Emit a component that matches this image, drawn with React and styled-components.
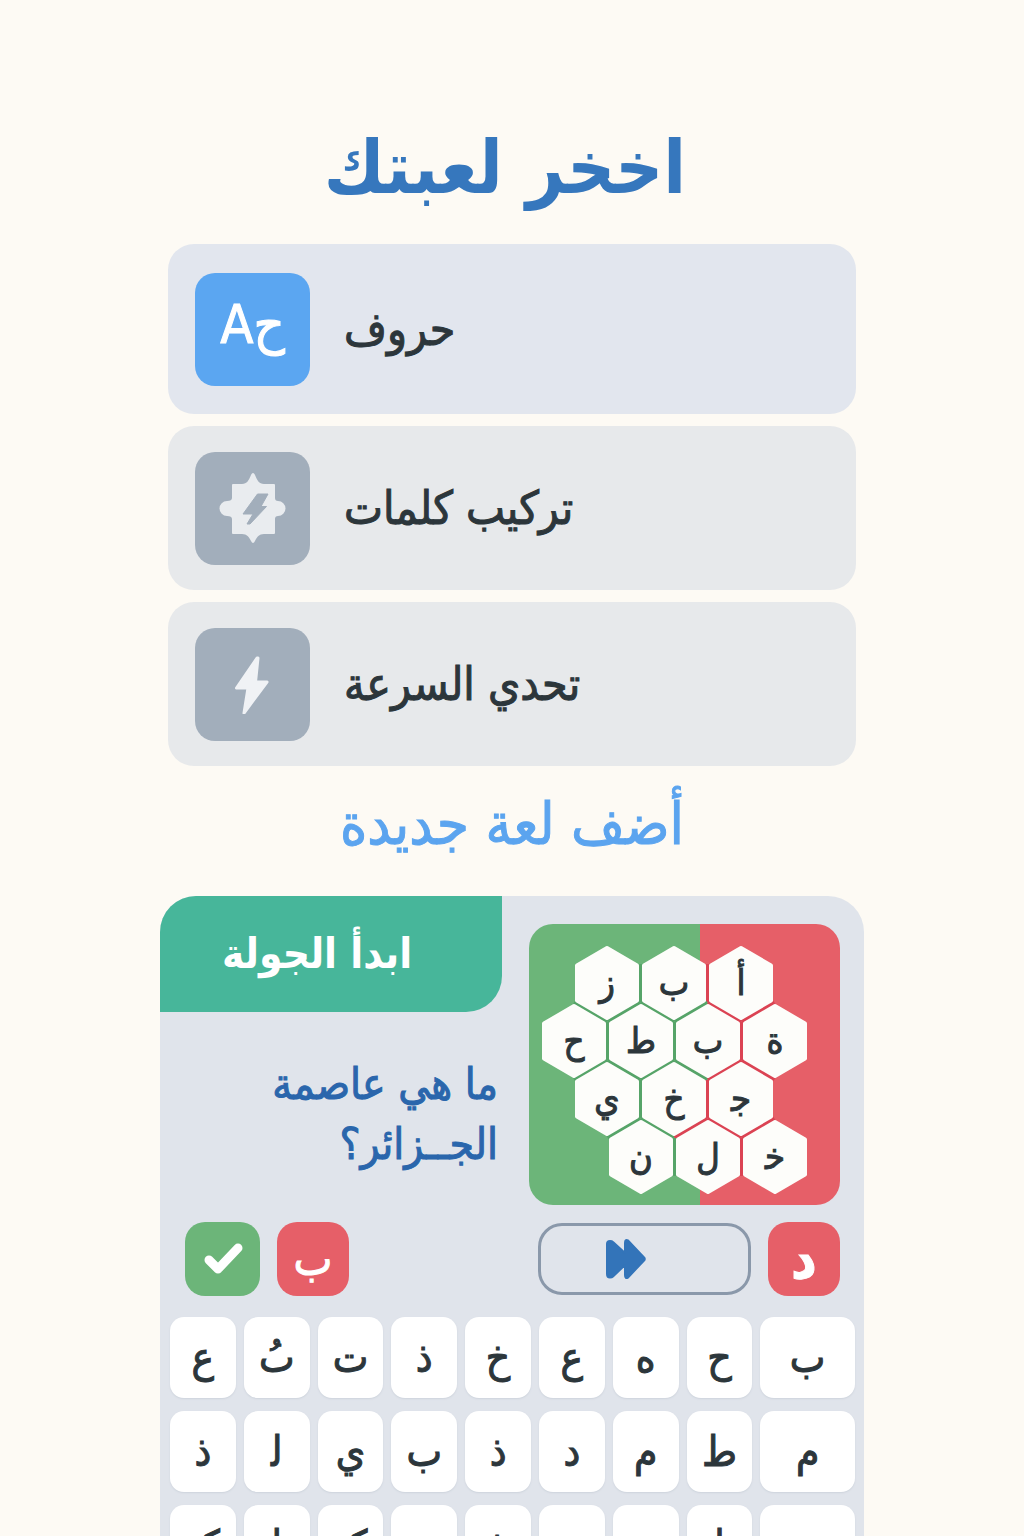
import React from 'react';
import styled, { createGlobalStyle } from 'styled-components';

const Global = createGlobalStyle`
  *, *::before, *::after { box-sizing: border-box; }
  body { margin: 0; background: #fdfaf4; }
  button { border: 0; padding: 0; font: inherit; color: inherit; cursor: pointer; }
  svg { display: block; }
`;

const ink = '#2c363b';

const Page = styled.div`
  height: 100vh;
  overflow-y: auto;
  scrollbar-width: none;
  padding: 0 16px;
  background: #fdfaf4;
  color: ${ink};
  font-family: 'DejaVu Sans Condensed', 'DejaVu Sans', 'Noto Sans', sans-serif;
`;

const Main = styled.main`
  max-width: 704px;
  margin: 0 auto;
  padding-top: 112px;
  display: flex;
  flex-direction: column;
`;

const Title = styled.h1`
  margin: 0;
  padding-right: 14px;
  height: 132px;
  line-height: 110px;
  text-align: center;
  font-size: 74px;
  font-weight: 700;
  color: #3677bd;
`;

const Games = styled.nav`
  display: flex;
  flex-direction: column;
  gap: 12px;
  padding: 0 8px;
`;

const GameCard = styled.button`
  display: flex;
  align-items: center;
  gap: 34px;
  height: ${(p) => (p.$active ? 170 : 164)}px;
  padding: 0 27px;
  border-radius: 26px;
  background: ${(p) => (p.$active ? '#e2e6ee' : '#e7e9eb')};
`;

const GameIcon = styled.span`
  flex: none;
  display: flex;
  align-items: center;
  justify-content: center;
  width: 115px;
  height: 113px;
  border-radius: 20px;
  background: ${(p) => (p.$active ? '#5ba6f1' : '#a2aebb')};
  color: #fff;
  font-size: 54px;
  line-height: 56px;
`;

const Letters = styled.span`
  padding-bottom: 8px;
  -webkit-text-stroke: 1px #fff;
`;

const GameName = styled.span`
  font-size: 46px;
  line-height: 64px;
  -webkit-text-stroke: 1px ${ink};
`;

const AddGame = styled.a`
  align-self: center;
  height: 130px;
  line-height: 116px;
  font-size: 58px;
  color: #5ba4ef;
  -webkit-text-stroke: 1px #5ba4ef;
  text-decoration: none;
`;

const Panel = styled.section`
  display: flex;
  flex-direction: column;
  border-radius: 36px 36px 0 0;
  background: #e0e4eb;
  padding-bottom: 12px;
`;

const Round = styled.div`
  display: flex;
  justify-content: space-between;
`;

const Prompt = styled.div`
  width: 342px;
  display: flex;
  flex-direction: column;
`;

const Start = styled.button`
  height: 116px;
  padding-right: 28px;
  border-radius: 36px 0 36px 0;
  background: #47b69a;
  color: #fff;
  font-size: 42px;
  line-height: 60px;
  font-weight: 700;
`;

const Question = styled.p`
  margin: 0;
  padding: 42px 4px 0 0;
  font-size: 44px;
  line-height: 60px;
  color: #2a66ac;
  -webkit-text-stroke: 1px #2a66ac;
`;

const Board = styled.div`
  width: 311px;
  height: 281px;
  margin: 28px 24px 0 0;
  padding: 21px 0 0 12px;
  border-radius: 24px;
  background: linear-gradient(to right, #6cb579 55%, #e65f68 55%);
`;

const Comb = styled.div`
  position: relative;
  width: 268px;
  display: flex;
  flex-direction: column;
`;

const Seams = styled.svg`
  position: absolute;
  inset: 0;
`;

const CombRow = styled.div`
  position: relative;
  display: flex;
  gap: 1px;
  height: 58px;
  padding-left: ${(p) => p.$indent}px;
`;

const Hex = styled.button`
  position: relative;
  width: 66px;
  height: 76px;
  background: none;
  font-size: 36px;
  line-height: 72px;
  -webkit-text-stroke: 1px ${ink};
`;

const HexShape = styled.svg`
  position: absolute;
  inset: 0;
`;

const HexLetter = styled.span`
  position: relative;
`;

const Controls = styled.div`
  display: flex;
  align-items: center;
  padding: 17px 24px 0 25px;
`;

const Square = styled.button`
  display: flex;
  align-items: center;
  justify-content: center;
  width: ${(p) => p.$width}px;
  height: 74px;
  border-radius: 20px;
  background: ${(p) => p.$color};
  color: #fff;
  font-size: ${(p) => (p.$bold ? 56 : 46)}px;
  line-height: 60px;
  font-weight: ${(p) => (p.$bold ? 700 : 400)};
  -webkit-text-stroke: 1px #fff;
`;

const Answers = styled.div`
  flex: 1;
  display: flex;
  gap: 17px;
`;

const Skip = styled.button`
  display: flex;
  align-items: center;
  width: 213px;
  height: 72px;
  margin-right: 17px;
  padding-left: 64px;
  border: 3px solid #8a98aa;
  border-radius: 24px;
  background: none;
`;

const Keyboard = styled.div`
  display: grid;
  grid-template-columns: repeat(8, 66fr) 95fr;
  grid-auto-rows: 81px;
  gap: 13px 8px;
  padding: 21px 9px 0 10px;
`;

const Key = styled.button`
  border-radius: 14px;
  background: #fff;
  box-shadow: 0 1px 2px #cdd3dc;
  font-size: 42px;
  line-height: 80px;
  -webkit-text-stroke: 1px ${ink};
`;

const games = [
  { name: 'حروف', icon: 'letters', active: true },
  { name: 'تركيب كلمات', icon: 'puzzle' },
  { name: 'تحدي السرعة', icon: 'bolt' },
];

const PITCH = 67;
const ROW = 58;
const comb = [
  { indent: 33, letters: ['ز', 'ب', 'أ'] },
  { indent: 0, letters: ['ح', 'ط', 'ب', 'ة'] },
  { indent: 33, letters: ['ي', 'خ', 'ج\u200d'] },
  { indent: 67, letters: ['ن', 'ل', 'خ\u200d'] },
];

const keys = [
  'ع', '\u066e\u064f', 'ت', 'ذ', 'خ', 'ع', 'ه', 'ح', 'ب',
  'ذ', 'ل\u200d', 'ي', 'ب', 'ذ', 'د', 'م', 'ط', 'م',
  'ک', 'ا', 'ک', 'ت', 'ذ', 'ر', 'ز', 'ا', 'ر',
];

function seams() {
  const cells = comb.flatMap((row, r) =>
    row.letters.map((_, i) => ({ x: row.indent + 33 + i * PITCH, y: 38 + r * ROW, r })),
  );
  const out = [];
  cells.forEach((a, i) =>
    cells.slice(i + 1).forEach((b) => {
      const dx = b.x - a.x;
      const dy = b.y - a.y;
      const d = Math.hypot(dx, dy);
      if (d > 72) return;
      const mx = (a.x + b.x) / 2;
      const my = (a.y + b.y) / 2;
      const ux = (-dy / d) * 19;
      const uy = (dx / d) * 19;
      const red = mx > 155 || (b.r === 3 && mx > 142);
      out.push({ x1: mx - ux, y1: my - uy, x2: mx + ux, y2: my + uy, red });
    }),
  );
  return out;
}

function Bolt() {
  return (
    <svg width="36" height="60" viewBox="0 0 36 60" aria-hidden="true">
      <path
        d="M22 4 L1.500 34 H13 L9 59 L32 28 H20.500 L23 4 Z"
        fill="#f0f2f5"
        stroke="#f0f2f5"
        strokeWidth="3"
        strokeLinejoin="round"
      />
    </svg>
  );
}

function Puzzle() {
  return (
    <svg width="68" height="72" viewBox="0 0 68 72" aria-hidden="true">
      <path
        d="M34 1 C35 1 35.500 2 36 3 C38 8 40 12 45 12 H55 Q56 12 56 13 V26 Q56 29 59 29 A7.500 7.500 0 0 1 59 44 Q56 44 56 47 V61 Q56 62 55 62 H45 C40 62 38 65 36 69 Q34 73 32 69 C30 65 28 62 23 62 H14 Q13 62 13 61 V47 Q13 44 8 44 A7.500 7.500 0 0 1 8 29 Q13 29 13 26 V13 Q13 12 14 12 H23 C28 12 30 8 32 3 C32.500 2 33 1 34 1 Z"
        fill="#e9ecef"
      />
      <path
        d="M38.500 22 H49 L42 34.500 H47.500 L31 52 H28 L34 42 H24 Z"
        fill="#a2aebb"
        stroke="#a2aebb"
        strokeLinejoin="round"
      />
    </svg>
  );
}

function Check() {
  return (
    <svg width="40" height="34" viewBox="0 0 40 34" aria-hidden="true">
      <path d="M6 18 L15 27 L35 6" fill="none" stroke="#fff" strokeWidth="9" strokeLinecap="round" strokeLinejoin="round" />
    </svg>
  );
}

function Forward() {
  return (
    <svg width="42" height="42" viewBox="0 0 42 42" aria-hidden="true">
      <path
        d="M2 6 Q2 3 5 3 Q7 3 8 4 L20 15 V5 Q20 1 23 2.500 L39.500 20 Q40 21 39.500 22 L23 39.500 Q20 41 20 37 V27 L8 38.500 Q7 39.500 5 39.500 Q2 39.500 2 36 Z"
        fill="#3374b9"
        stroke="#3374b9"
        strokeWidth="2"
        strokeLinejoin="round"
      />
    </svg>
  );
}

function Icon({ kind }) {
  if (kind === 'puzzle') return <Puzzle />;
  if (kind === 'bolt') return <Bolt />;
  return <Letters dir="ltr">Aح</Letters>;
}

export default function App() {
  return (
    <Page lang="ar">
      <Global />
      <Main>
        <Title dir="rtl">اخخر لعبتك</Title>
        <Games>
          {games.map((g) => (
            <GameCard key={g.name} type="button" $active={g.active}>
              <GameIcon $active={g.active}>
                <Icon kind={g.icon} />
              </GameIcon>
              <GameName dir="rtl">{g.name}</GameName>
            </GameCard>
          ))}
        </Games>
        <AddGame href="#new" dir="rtl">أضف لعة جديدة</AddGame>
        <Panel>
          <Round>
            <Prompt>
              <Start type="button" dir="rtl">ابدأ الجولة</Start>
              <Question dir="rtl">
                ما هي عاصمة
                <br />
                الجــزائر؟
              </Question>
            </Prompt>
            <Board>
              <Comb>
                <Seams width="268" height="250" aria-hidden="true">
                  {seams().map((s, i) => (
                    <line key={i} x1={s.x1} y1={s.y1} x2={s.x2} y2={s.y2} stroke={s.red ? '#db4353' : '#56a468'} strokeWidth="4" />
                  ))}
                </Seams>
                {comb.map((row, r) => (
                  <CombRow key={r} $indent={row.indent}>
                    {row.letters.map((l, i) => (
                      <Hex key={i} type="button">
                        <HexShape width="66" height="76" viewBox="0 0 66 76" aria-hidden="true">
                          <path d="M33 3 L63 20.500 V55.500 L33 73 L3 55.500 V20.500 Z" fill="#fdfdfa" stroke="#fdfdfa" strokeWidth="4" strokeLinejoin="round" />
                        </HexShape>
                        <HexLetter>{l}</HexLetter>
                      </Hex>
                    ))}
                  </CombRow>
                ))}
              </Comb>
            </Board>
          </Round>
          <Controls>
            <Answers>
              <Square type="button" $width={75} $color="#6cb579" aria-label="صحيح"><Check /></Square>
              <Square type="button" $width={72} $color="#e65f68">ب</Square>
            </Answers>
            <Skip type="button" aria-label="تخطي"><Forward /></Skip>
            <Square type="button" $width={72} $color="#e65f68" $bold>د</Square>
          </Controls>
          <Keyboard>
            {keys.map((k, i) => (
              <Key key={i} type="button">{k}</Key>
            ))}
          </Keyboard>
        </Panel>
      </Main>
    </Page>
  );
}
